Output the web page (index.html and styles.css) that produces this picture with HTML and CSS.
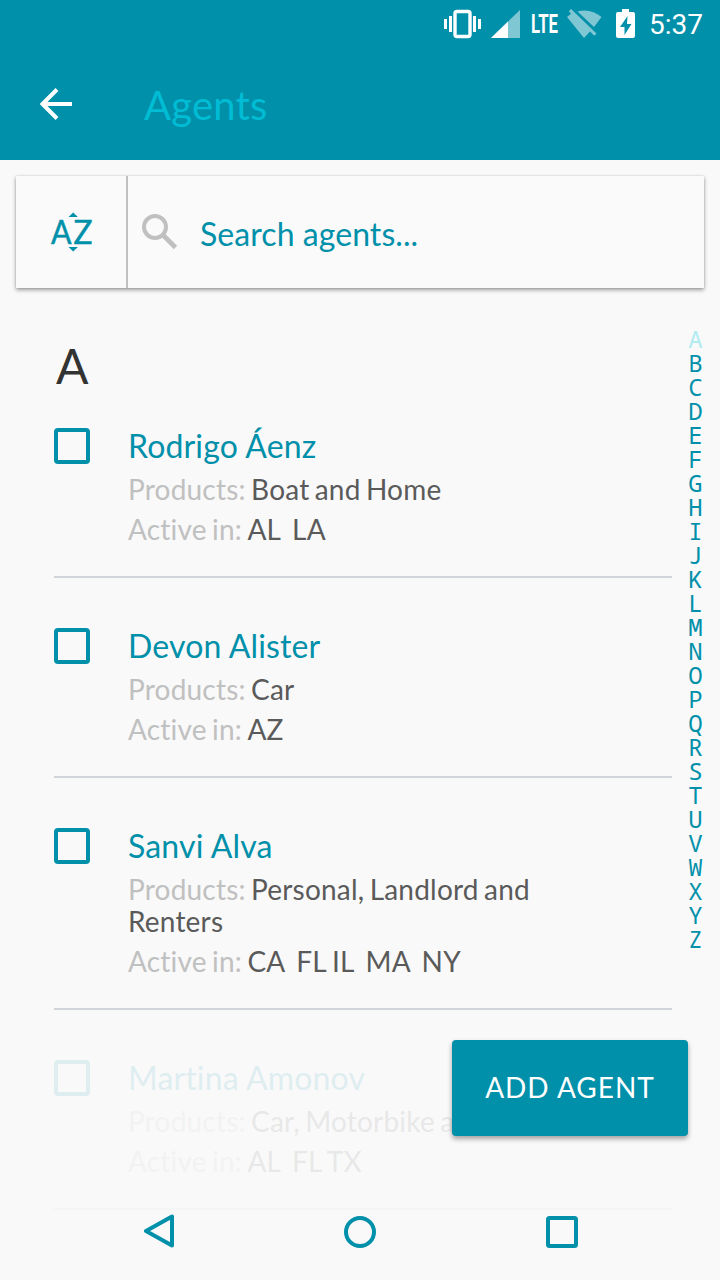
FILE: index.html
```html
<!DOCTYPE html>
<html lang="en">
<head>
<meta charset="utf-8">
<title>Agents</title>
<link rel="stylesheet" href="styles.css">
</head>
<body>
<div class="screen">
  <header class="header">
    <div class="status">
      <svg class="vibrate" width="38" height="48" viewBox="444 0 38 48"><g fill="#fff"><path d="M444 19h3v10h-3zM449 16h3v16h-3zM473 16h3v16h-3zM478 19h3v10h-3z"/></g><rect x="455" y="11.500" width="15" height="25" rx="2" fill="none" stroke="#fff" stroke-width="3.400"/></svg>
      <svg class="signal" width="29" height="48" viewBox="491 0 29 48"><path d="M491 38l29-28v28z" fill="#80c7d4"/><path d="M491 38l17-16.4V38z" fill="#fff"/></svg>
      <svg class="lte" width="34" height="48" viewBox="528 0 34 48"><text x="531" y="33" textLength="27" lengthAdjust="spacingAndGlyphs">LTE</text></svg>
      <svg class="wifi" width="36" height="48" viewBox="567 0 36 48"><g fill="#80c7d4"><path d="M567 17l4-3.200-2.200-2.600 2.200-2.200 25.500 24.500-2.200 2.200-4.300-4.200L584 38z"/><path d="M577.500 11.500c8-2.500 16.500-.8 24 5.500L594 27z"/></g></svg>
      <svg class="battery" width="20" height="48" viewBox="616 0 20 48"><path d="M622 9h7v3h4q2 0 2 2v22q0 2-2 2h-15q-2 0-2-2V14q0-2 2-2h4z" fill="#fff"/><path d="M627.500 16l-7.500 11h4.500v8l7-11H627z" fill="#0090aa"/></svg>
      <span class="time">5:37</span>
    </div>
    <div class="toolbar">
      <svg class="back" width="34" height="34" viewBox="0 0 34 34"><path d="M33 17H4M18 2.500L3.500 17 18 31.500" fill="none" stroke="#fff" stroke-width="4"/></svg>
      <h1 class="title">Agents</h1>
    </div>
  </header>

  <div class="search">
    <div class="sort">
      <svg width="44" height="44" viewBox="50 210 44 44"><text class="az" x="51" y="243.500" textLength="20.500" lengthAdjust="spacingAndGlyphs">A</text><text class="az" x="73.500" y="243.500" textLength="19" lengthAdjust="spacingAndGlyphs">Z</text><path d="M68.500 217l4.700-4.500 4.700 4.500zM68.500 247l4.700 4.500 4.700-4.500z" fill="#0090aa"/></svg>
    </div>
    <svg class="glass" width="38" height="38" viewBox="141 213 38 38"><circle cx="155" cy="227" r="11" fill="none" stroke="#c0c0c0" stroke-width="4"/><path d="M163 235l12.500 12.500" stroke="#c0c0c0" stroke-width="4.800"/></svg>
    <span class="placeholder">Search agents...</span>
  </div>

  <div class="content">
    <main class="list">
      <h2 class="letter">A</h2>
      <section class="agent first">
        <span class="check"></span>
        <div class="info"><h3>Rodrigo Áenz</h3>
          <p><span class="label">Products:</span> Boat and Home</p>
          <p><span class="label">Active in:</span> <span class="states">AL  LA</span></p></div>
      </section>
      <section class="agent">
        <span class="check"></span>
        <div class="info"><h3>Devon Alister</h3>
          <p><span class="label">Products:</span> Car</p>
          <p><span class="label">Active in:</span> <span class="states">AZ</span></p></div>
      </section>
      <section class="agent">
        <span class="check"></span>
        <div class="info"><h3>Sanvi Alva</h3>
          <p><span class="label">Products:</span> Personal, Landlord and Renters</p>
          <p><span class="label">Active in:</span> <span class="states">CA  FL IL  MA  NY</span></p></div>
      </section>
      <section class="agent faded">
        <span class="check"></span>
        <div class="info"><h3>Martina Amonov</h3>
          <p class="clip"><span class="label">Products:</span> Car, Motorbike a</p>
          <p><span class="label">Active in:</span> <span class="states">AL  FL TX</span></p></div>
      </section>
    </main>
    <nav class="index">
      <span class="current">A</span><span>B</span><span>C</span><span>D</span><span>E</span><span>F</span><span>G</span><span>H</span><span>I</span><span>J</span><span>K</span><span>L</span><span>M</span><span>N</span><span>O</span><span>P</span><span>Q</span><span>R</span><span>S</span><span>T</span><span>U</span><span>V</span><span>W</span><span>X</span><span>Y</span><span>Z</span>
    </nav>
  </div>

  <button class="add">ADD AGENT</button>

  <div class="navbar">
    <svg width="34" height="36" viewBox="142 1214 34 36"><path d="M172 1216.500v29L146 1231z"/></svg>
    <svg width="34" height="34" viewBox="344 1215 34 34"><circle cx="360" cy="1232" r="14"/></svg>
    <svg width="34" height="34" viewBox="545 1215 34 34"><rect x="548" y="1218" width="28" height="28" rx="1.500"/></svg>
  </div>
</div>
</body>
</html>
```
FILE: styles.css
```css
* { box-sizing: border-box; margin: 0; padding: 0; }
body { background: #f9f9f9; font-family: Lato, sans-serif; font-variant-ligatures: none; }
h1, h2, h3 { font-weight: 400; }
svg { display: block; flex: none; }
.screen { position: relative; width: 720px; height: 1280px; overflow: hidden; background: #f9f9f9; }

.header { height: 160px; background: #0090aa; }
.status { height: 48px; display: flex; padding-left: 444px; }
.signal { margin-left: 9px; }
.lte { margin-left: 8px; }
.lte text { font: 700 25px Roboto, sans-serif; fill: #fff; }
.wifi { margin-left: 5px; }
.battery { margin-left: 13px; }
.time { margin-left: 13px; font: 28px/49px Roboto, sans-serif; color: #fff; }
.toolbar { height: 112px; display: flex; align-items: center; padding-left: 39px; }
.title { margin: 1px 0 0 71px; font-size: 40px; line-height: 48px; letter-spacing: .2px; color: #00bcd4; }

.search { display: flex; align-items: center; margin: 16px 16px 0; height: 112px; background: #fafafa; box-shadow: 0 2px 4px rgba(0,0,0,.38), 0 0 2px rgba(0,0,0,.12); }
.sort { width: 112px; height: 112px; display: flex; align-items: center; padding-left: 34px; border-right: 2px solid #c0c0c0; }
.az { font: 400 33px Lato, sans-serif; fill: #0090aa; stroke: #0090aa; stroke-width: .5; }
.glass { margin-left: 13px; }
.placeholder { margin: 3px 0 0 21px; font-size: 32px; line-height: 40px; letter-spacing: .06px; color: #0090aa; }

.content { display: flex; justify-content: space-between; }
.list { width: 672px; padding-left: 54px; }
.letter { height: 120px; padding: 49px 0 0 2px; font-size: 48px; line-height: 58px; color: #333; }
.agent { display: flex; padding: 48px 0 31px; border-bottom: 2px solid #d1d5d9; }
.agent.first { padding-top: 18px; }
.agent.faded { opacity: .1; }
.check { flex: none; width: 36px; height: 36px; margin-top: 2px; border: 4px solid #0090aa; border-radius: 4px; }
.info { width: 440px; margin-left: 38px; }
.info h3 { font-size: 32px; line-height: 40px; letter-spacing: .15px; color: #0090aa; margin-bottom: 7px; }
.info p { font-size: 28px; line-height: 32px; letter-spacing: .2px; word-spacing: -2px; color: #5a5a5a; }
.info p + p { margin-top: 8px; }
.info .label { color: #c0c0c0; }
.info .states { white-space: pre; word-spacing: -1.500px; }
.clip { white-space: nowrap; }

.index { width: 48px; padding: 39px 1px 0 0; display: flex; flex-direction: column; align-items: center; font: 24px/24px "Noto Sans Mono", "DejaVu Sans Mono", monospace; color: #0090aa; }
.index span { height: 24px; }
.index .current { color: #b2ebf2; }

.add { position: absolute; left: 452px; top: 1040px; width: 236px; height: 96px; border: 0; border-radius: 4px; padding-bottom: 2px; background: #0090aa; color: #fff; font: 28px Lato, sans-serif; letter-spacing: 1px; box-shadow: 0 3px 5px rgba(0,0,0,.35); }
.navbar { position: absolute; left: 0; right: 0; bottom: 0; height: 96px; display: flex; justify-content: space-between; align-items: center; padding: 0 141px 0 142px; }
.navbar svg { fill: none; stroke: #0090aa; stroke-width: 4; stroke-linejoin: round; }
```
